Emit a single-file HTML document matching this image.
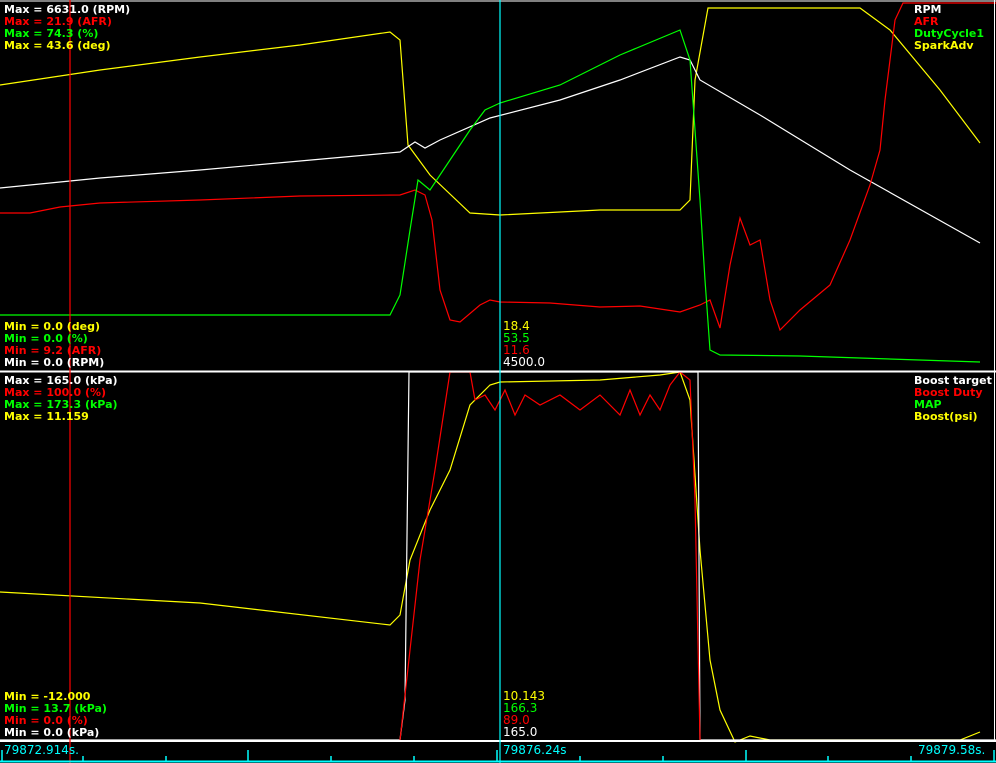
<!DOCTYPE html>
<html><head><meta charset="utf-8"><style>
html,body{margin:0;padding:0;background:#000;width:996px;height:763px;overflow:hidden}
svg{display:block}
text{font-family:"DejaVu Sans","Liberation Sans",sans-serif;font-size:11px;font-weight:bold}
.n{font-weight:normal;font-size:12px}
</style></head><body>
<svg width="996" height="763" viewBox="0 0 996 763" xmlns="http://www.w3.org/2000/svg">
<rect width="996" height="763" fill="#000"/>
<g fill="none" stroke-width="1.2">
<polyline stroke="#ff0" points="0,85 100,70 200,57 300,45 390,32 400,40 408,145 430,175 470,213 500,215 560,212 600,210 680,210 690,200 695,80 708,8 860,8 890,30 940,90 980,143"/>
<polyline stroke="#fff" points="0,188 100,178 200,170 300,161 400,152 415,142 425,148 440,140 490,118 560,100 620,80 680,57 690,60 700,80 760,115 850,170 980,243"/>
<polyline stroke="#f00" points="0,213 30,213 60,207 100,203 200,200 300,196 400,195 415,190 425,195 432,220 440,290 450,320 460,322 480,305 490,300 500,302 550,303 600,307 640,306 680,312 700,305 710,300 720,328 730,265 740,218 750,245 760,240 770,300 780,330 800,310 830,285 850,240 870,185 880,150 885,100 895,20 903,3 996,3"/>
<polyline stroke="#0f0" points="0,315 390,315 400,295 410,230 418,180 430,190 450,160 470,130 485,110 500,103 560,85 620,55 680,30 690,60 700,200 705,280 710,350 720,355 800,356 980,362"/>
<polyline stroke="#ff0" points="0,592 200,603 390,625 400,615 410,560 430,510 450,470 470,405 490,385 500,382 600,380 660,375 680,372 690,400 700,550 710,660 720,710 735,742 750,736 770,740 960,740 980,732"/>
<polyline stroke="#fff" points="0,740 400,740 405,700 409,372 690,372 698,372 700,740 996,740"/>
<polyline stroke="#f00" points="400,740 410,650 420,560 435,470 450,372 470,372 475,400 485,395 495,410 505,390 515,415 525,395 540,405 560,395 580,410 600,395 620,415 630,390 640,415 650,395 660,410 670,385 680,372 690,380 695,500 700,740"/>
</g>
<line x1="0" y1="1" x2="996" y2="1" stroke="#fff"/>
<line x1="994.5" y1="0" x2="994.5" y2="741" stroke="#fff"/>
<line x1="0" y1="371.5" x2="996" y2="371.5" stroke="#fff" stroke-width="2"/>
<line x1="0" y1="741" x2="996" y2="741" stroke="#fff" stroke-width="2"/>
<line x1="70" y1="0" x2="70" y2="763" stroke="#f00" stroke-width="1.2"/>
<line x1="500" y1="0" x2="500" y2="763" stroke="#0ff" stroke-width="1.2"/>
<line x1="0" y1="761.5" x2="996" y2="761.5" stroke="#0ff" stroke-width="2"/>
<g stroke="#0ff" stroke-width="1.5">
<line x1="83" y1="756" x2="83" y2="762"/><line x1="166" y1="756" x2="166" y2="762"/>
<line x1="248" y1="750" x2="248" y2="762"/><line x1="331" y1="756" x2="331" y2="762"/>
<line x1="414" y1="756" x2="414" y2="762"/><line x1="497" y1="750" x2="497" y2="762"/>
<line x1="580" y1="756" x2="580" y2="762"/><line x1="663" y1="756" x2="663" y2="762"/>
<line x1="746" y1="750" x2="746" y2="762"/><line x1="828" y1="756" x2="828" y2="762"/>
<line x1="911" y1="756" x2="911" y2="762"/><line x1="2" y1="750" x2="2" y2="762"/><line x1="994" y1="750" x2="994" y2="762"/>
</g>
<text x="4" y="13" fill="#fff">Max = 6631.0 (RPM)</text>
<text x="4" y="25" fill="#f00">Max = 21.9 (AFR)</text>
<text x="4" y="37" fill="#0f0">Max = 74.3 (%)</text>
<text x="4" y="49" fill="#ff0">Max = 43.6 (deg)</text>
<text x="914" y="13" fill="#fff">RPM</text>
<text x="914" y="25" fill="#f00">AFR</text>
<text x="914" y="37" fill="#0f0">DutyCycle1</text>
<text x="914" y="49" fill="#ff0">SparkAdv</text>
<text x="4" y="330" fill="#ff0">Min = 0.0 (deg)</text>
<text x="4" y="342" fill="#0f0">Min = 0.0 (%)</text>
<text x="4" y="354" fill="#f00">Min = 9.2 (AFR)</text>
<text x="4" y="366" fill="#fff">Min = 0.0 (RPM)</text>
<text x="503" y="330" fill="#ff0" class="n">18.4</text>
<text x="503" y="342" fill="#0f0" class="n">53.5</text>
<text x="503" y="354" fill="#f00" class="n">11.6</text>
<text x="503" y="366" fill="#fff" class="n">4500.0</text>
<text x="4" y="384" fill="#fff">Max = 165.0 (kPa)</text>
<text x="4" y="396" fill="#f00">Max = 100.0 (%)</text>
<text x="4" y="408" fill="#0f0">Max = 173.3 (kPa)</text>
<text x="4" y="420" fill="#ff0">Max = 11.159</text>
<text x="914" y="384" fill="#fff">Boost target</text>
<text x="914" y="396" fill="#f00">Boost Duty</text>
<text x="914" y="408" fill="#0f0">MAP</text>
<text x="914" y="420" fill="#ff0">Boost(psi)</text>
<text x="4" y="700" fill="#ff0">Min = -12.000</text>
<text x="4" y="712" fill="#0f0">Min = 13.7 (kPa)</text>
<text x="4" y="724" fill="#f00">Min = 0.0 (%)</text>
<text x="4" y="736" fill="#fff">Min = 0.0 (kPa)</text>
<text x="503" y="700" fill="#ff0" class="n">10.143</text>
<text x="503" y="712" fill="#0f0" class="n">166.3</text>
<text x="503" y="724" fill="#f00" class="n">89.0</text>
<text x="503" y="736" fill="#fff" class="n">165.0</text>
<text x="4" y="754" fill="#0ff" class="n">79872.914s.</text>
<text x="503" y="754" fill="#0ff" class="n">79876.24s</text>
<text x="918" y="754" fill="#0ff" class="n">79879.58s.</text>
</svg>
</body></html>
